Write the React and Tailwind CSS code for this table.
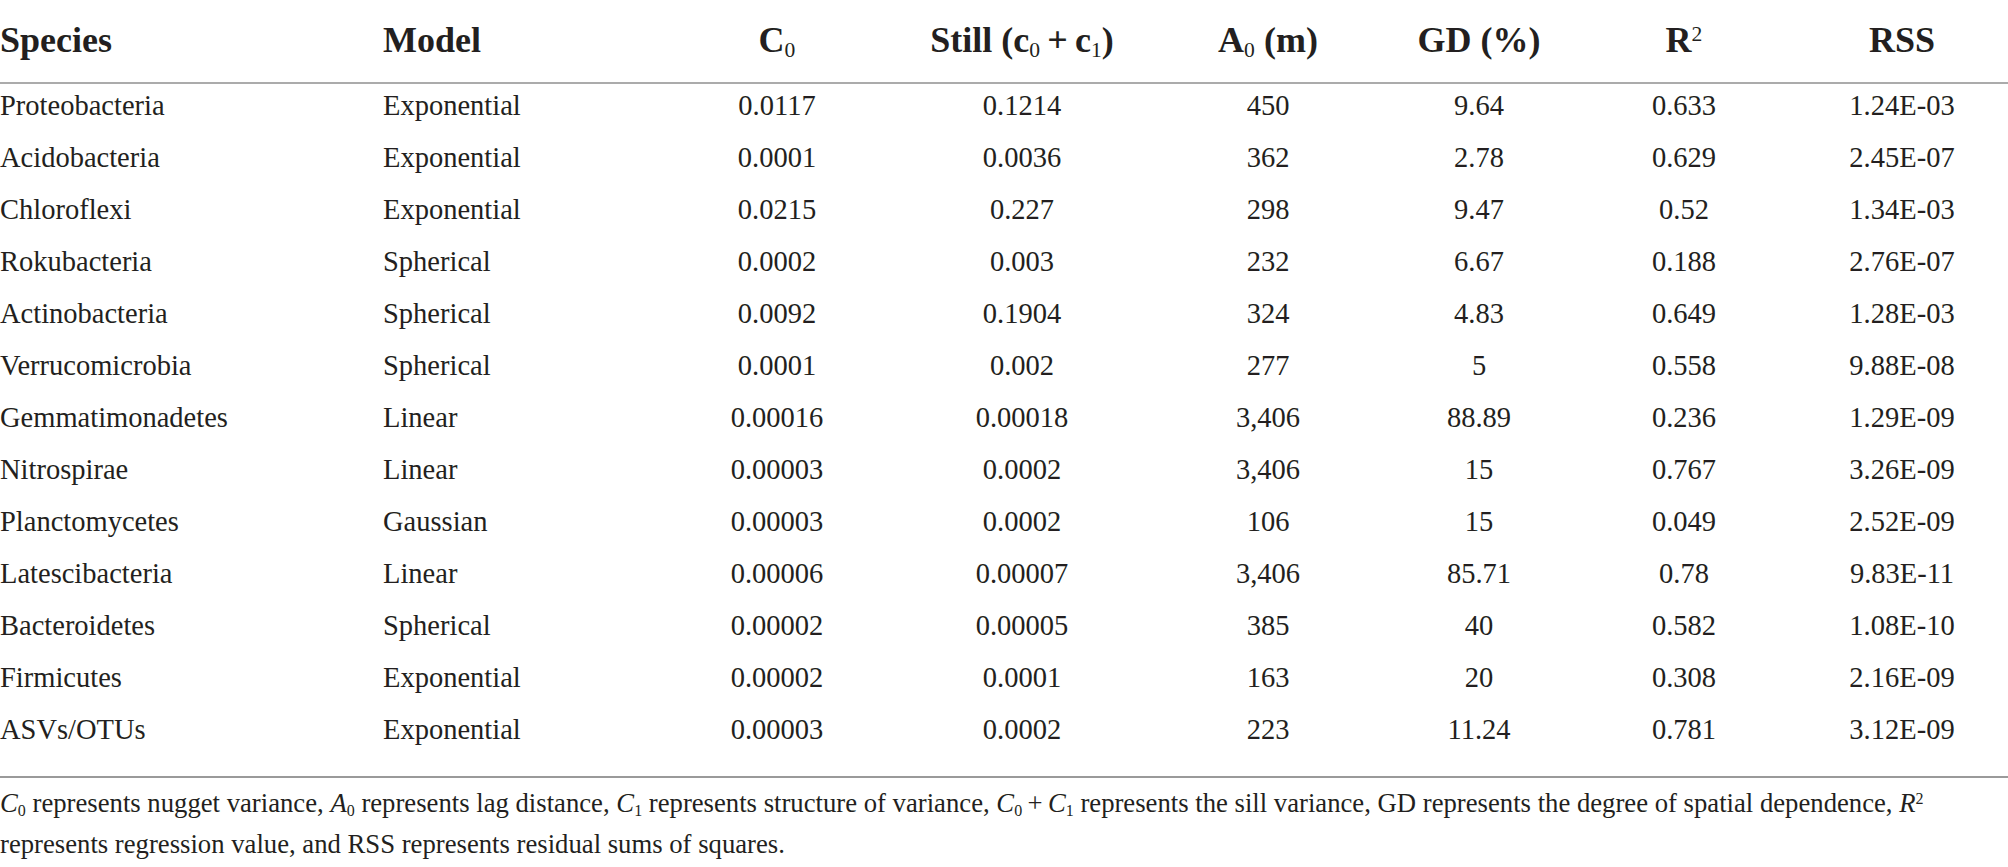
const rows = [
  ["Proteobacteria", "Exponential", "0.0117", "0.1214", "450", "9.64", "0.633", "1.24E-03"],
  ["Acidobacteria", "Exponential", "0.0001", "0.0036", "362", "2.78", "0.629", "2.45E-07"],
  ["Chloroflexi", "Exponential", "0.0215", "0.227", "298", "9.47", "0.52", "1.34E-03"],
  ["Rokubacteria", "Spherical", "0.0002", "0.003", "232", "6.67", "0.188", "2.76E-07"],
  ["Actinobacteria", "Spherical", "0.0092", "0.1904", "324", "4.83", "0.649", "1.28E-03"],
  ["Verrucomicrobia", "Spherical", "0.0001", "0.002", "277", "5", "0.558", "9.88E-08"],
  ["Gemmatimonadetes", "Linear", "0.00016", "0.00018", "3,406", "88.89", "0.236", "1.29E-09"],
  ["Nitrospirae", "Linear", "0.00003", "0.0002", "3,406", "15", "0.767", "3.26E-09"],
  ["Planctomycetes", "Gaussian", "0.00003", "0.0002", "106", "15", "0.049", "2.52E-09"],
  ["Latescibacteria", "Linear", "0.00006", "0.00007", "3,406", "85.71", "0.78", "9.83E-11"],
  ["Bacteroidetes", "Spherical", "0.00002", "0.00005", "385", "40", "0.582", "1.08E-10"],
  ["Firmicutes", "Exponential", "0.00002", "0.0001", "163", "20", "0.308", "2.16E-09"],
  ["ASVs/OTUs", "Exponential", "0.00003", "0.0002", "223", "11.24", "0.781", "3.12E-09"],
];

const cols = "grid grid-cols-[383px_277px_234px_256px_236px_186px_224px_212px]";

const Sub = ({ children }) => <sub className="text-[60%] font-normal">{children}</sub>;

export default function App() {
  return (
    <div className="w-[2008px] h-[867px] bg-white text-[#231f20] font-['Liberation_Serif',serif] overflow-hidden">
      {/* header */}
      <div className={`${cols} h-[84px] items-center border-b-2 border-[#ababab] text-[36px] font-bold pb-[2px]`}>
        <div>Species</div>
        <div>Model</div>
        <div className="text-center">C<Sub>0</Sub></div>
        <div className="text-center">Still (c<Sub>0</Sub>&thinsp;+&thinsp;c<Sub>1</Sub>)</div>
        <div className="text-center">A<Sub>0</Sub> (m)</div>
        <div className="text-center">GD (%)</div>
        <div className="text-center">R<sup className="text-[60%] font-normal">2</sup></div>
        <div className="text-center">RSS</div>
      </div>

      {/* body */}
      <div className="pb-[16px] border-b-2 border-[#9a9a9a]">
        {rows.map((r) => (
          <div key={r[0]} className={`${cols} h-[52px] text-[28.5px] leading-[44px]`}>
            {r.map((c, i) => (
              <div key={i} className={i < 2 ? "" : "text-center"}>{c}</div>
            ))}
          </div>
        ))}
      </div>

      {/* footnote */}
      <p className="pt-[5px] text-[26.7px] leading-[41px]">
        <i>C</i><Sub>0</Sub> represents nugget variance, <i>A</i><Sub>0</Sub> represents lag distance, <i>C</i><Sub>1</Sub> represents structure of variance, <i>C</i><Sub>0</Sub>&thinsp;+&thinsp;<i>C</i><Sub>1</Sub> represents the sill variance, GD represents the degree of spatial dependence, <i>R</i><sup className="text-[60%]">2</sup>
        <br />
        represents regression value, and RSS represents residual sums of squares.
      </p>
    </div>
  );
}
